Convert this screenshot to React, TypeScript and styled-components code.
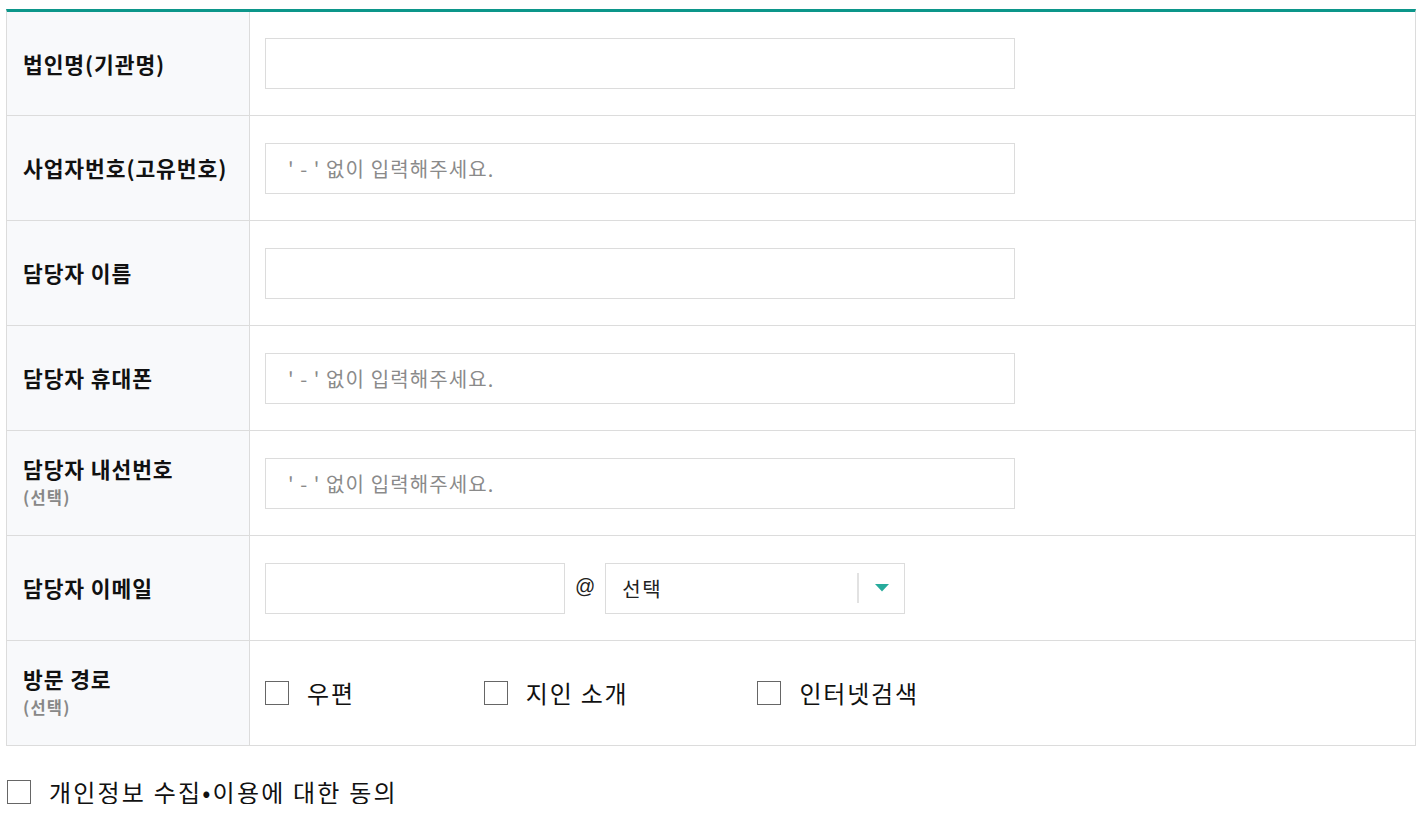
import React from "react";
import styled, { createGlobalStyle } from "styled-components";

const Global = createGlobalStyle`
  html, body { margin: 0; padding: 0; background: #fff; }
  body { font-family: "Noto Sans CJK KR", "Noto Sans", "Liberation Sans", sans-serif; color: #111; }
  * { box-sizing: border-box; }
`;

const Page = styled.div`
  padding: 9px 7px 0 6px;
`;

const Table = styled.div`
  border-top: 3px solid #0c968a;
  border-left: 1px solid #dcdcdc;
  border-right: 1px solid #dcdcdc;
  display: flex;
  flex-direction: column;
`;

const Row = styled.div`
  display: grid;
  grid-template-columns: 243px 1fr;
  height: 105px;
  border-bottom: 1px solid #dcdcdc;
  &:first-child { height: 104px; }
`;

const Head = styled.div`
  background: #f8f9fb;
  border-right: 1px solid #dcdcdc;
  padding-left: 16px;
  display: flex;
  flex-direction: column;
  justify-content: center;
`;

const Title = styled.div`
  font-size: 21.5px;
  font-weight: 700;
  line-height: 28px;
  letter-spacing: 0.9px;
  color: #111;
  white-space: nowrap;
`;

const Sub = styled.div`
  font-size: 16.5px;
  font-weight: 700;
  line-height: 28px;
  letter-spacing: 1.2px;
  color: #888;
`;

const Cell = styled.div`
  display: flex;
  align-items: center;
  padding-left: 15px;
`;

const TextInput = styled.input<{ $w?: number }>`
  width: ${(p) => p.$w ?? 750}px;
  height: 51px;
  border: 1px solid #dcdcdc;
  background: #fff;
  padding: 0 0 0 22px;
  font-family: "Noto Sans CJK KR", "Liberation Sans", sans-serif;
  font-size: 20px;
  letter-spacing: 1.1px;
  color: #222;
  outline: none;
  &::placeholder { color: #8a8a8a; }
`;

const At = styled.span`
  font-family: "Liberation Sans", sans-serif;
  font-size: 20px;
  color: #222;
  margin: 0 10px;
  position: relative;
  top: -2px;
`;

const Select = styled.div`
  width: 300px;
  height: 51px;
  border: 1px solid #dcdcdc;
  display: flex;
  align-items: center;
  padding-left: 16px;
`;

const SelectText = styled.span`
  flex: 1;
  font-size: 20px;
  letter-spacing: 1.5px;
  color: #222;
`;

const Divider = styled.span`
  width: 2px;
  height: 30px;
  background: #e2e2e2;
`;

const Caret = styled.span`
  width: 45px;
  display: flex;
  justify-content: center;
  align-items: center;
`;

const Checks = styled.div`
  display: flex;
  align-items: center;
`;

const CheckItem = styled.label<{ $mr?: number }>`
  display: flex;
  align-items: center;
  margin-right: ${(p) => p.$mr ?? 129}px;
  cursor: pointer;
`;

const Box = styled.span`
  width: 24px;
  height: 24px;
  border: 1px solid #666;
  background: #fff;
  flex: none;
`;

const CheckText = styled.span<{ $ls?: number }>`
  margin-left: 18px;
  font-size: 24px;
  line-height: 24px;
  letter-spacing: ${(p) => p.$ls ?? 1.8}px;
  color: #111;
  white-space: nowrap;
`;

const Agree = styled.div`
  margin-top: 34px;
  padding-left: 1px;
  display: flex;
  align-items: center;
`;

type Field = { title: string; sub?: string; placeholder?: string };

const fields: Field[] = [
  { title: "법인명(기관명)" },
  { title: "사업자번호(고유번호)", placeholder: "' - ' 없이 입력해주세요." },
  { title: "담당자 이름" },
  { title: "담당자 휴대폰", placeholder: "' - ' 없이 입력해주세요." },
  { title: "담당자 내선번호", sub: "(선택)", placeholder: "' - ' 없이 입력해주세요." },
];

export default function App() {
  return (
    <>
      <Global />
      <Page>
        <Table>
          {fields.map((f) => (
            <Row key={f.title}>
              <Head>
                <Title>{f.title}</Title>
                {f.sub && <Sub>{f.sub}</Sub>}
              </Head>
              <Cell>
                <TextInput placeholder={f.placeholder ?? ""} />
              </Cell>
            </Row>
          ))}
          <Row>
            <Head>
              <Title>담당자 이메일</Title>
            </Head>
            <Cell>
              <TextInput $w={300} />
              <At>@</At>
              <Select>
                <SelectText>선택</SelectText>
                <Divider />
                <Caret>
                  <svg width="14" height="8" viewBox="0 0 14 8">
                    <path d="M0 0 H14 L7 7.5 Z" fill="#27ab9c" />
                  </svg>
                </Caret>
              </Select>
            </Cell>
          </Row>
          <Row>
            <Head>
              <Title>방문 경로</Title>
              <Sub>(선택)</Sub>
            </Head>
            <Cell>
              <Checks>
                <CheckItem>
                  <Box />
                  <CheckText>우편</CheckText>
                </CheckItem>
                <CheckItem>
                  <Box />
                  <CheckText>지인 소개</CheckText>
                </CheckItem>
                <CheckItem $mr={0}>
                  <Box />
                  <CheckText>인터넷검색</CheckText>
                </CheckItem>
              </Checks>
            </Cell>
          </Row>
        </Table>
        <Agree>
          <CheckItem $mr={0}>
            <Box />
            <CheckText $ls={2.2}>개인정보 수집•이용에 대한 동의</CheckText>
          </CheckItem>
        </Agree>
      </Page>
    </>
  );
}
